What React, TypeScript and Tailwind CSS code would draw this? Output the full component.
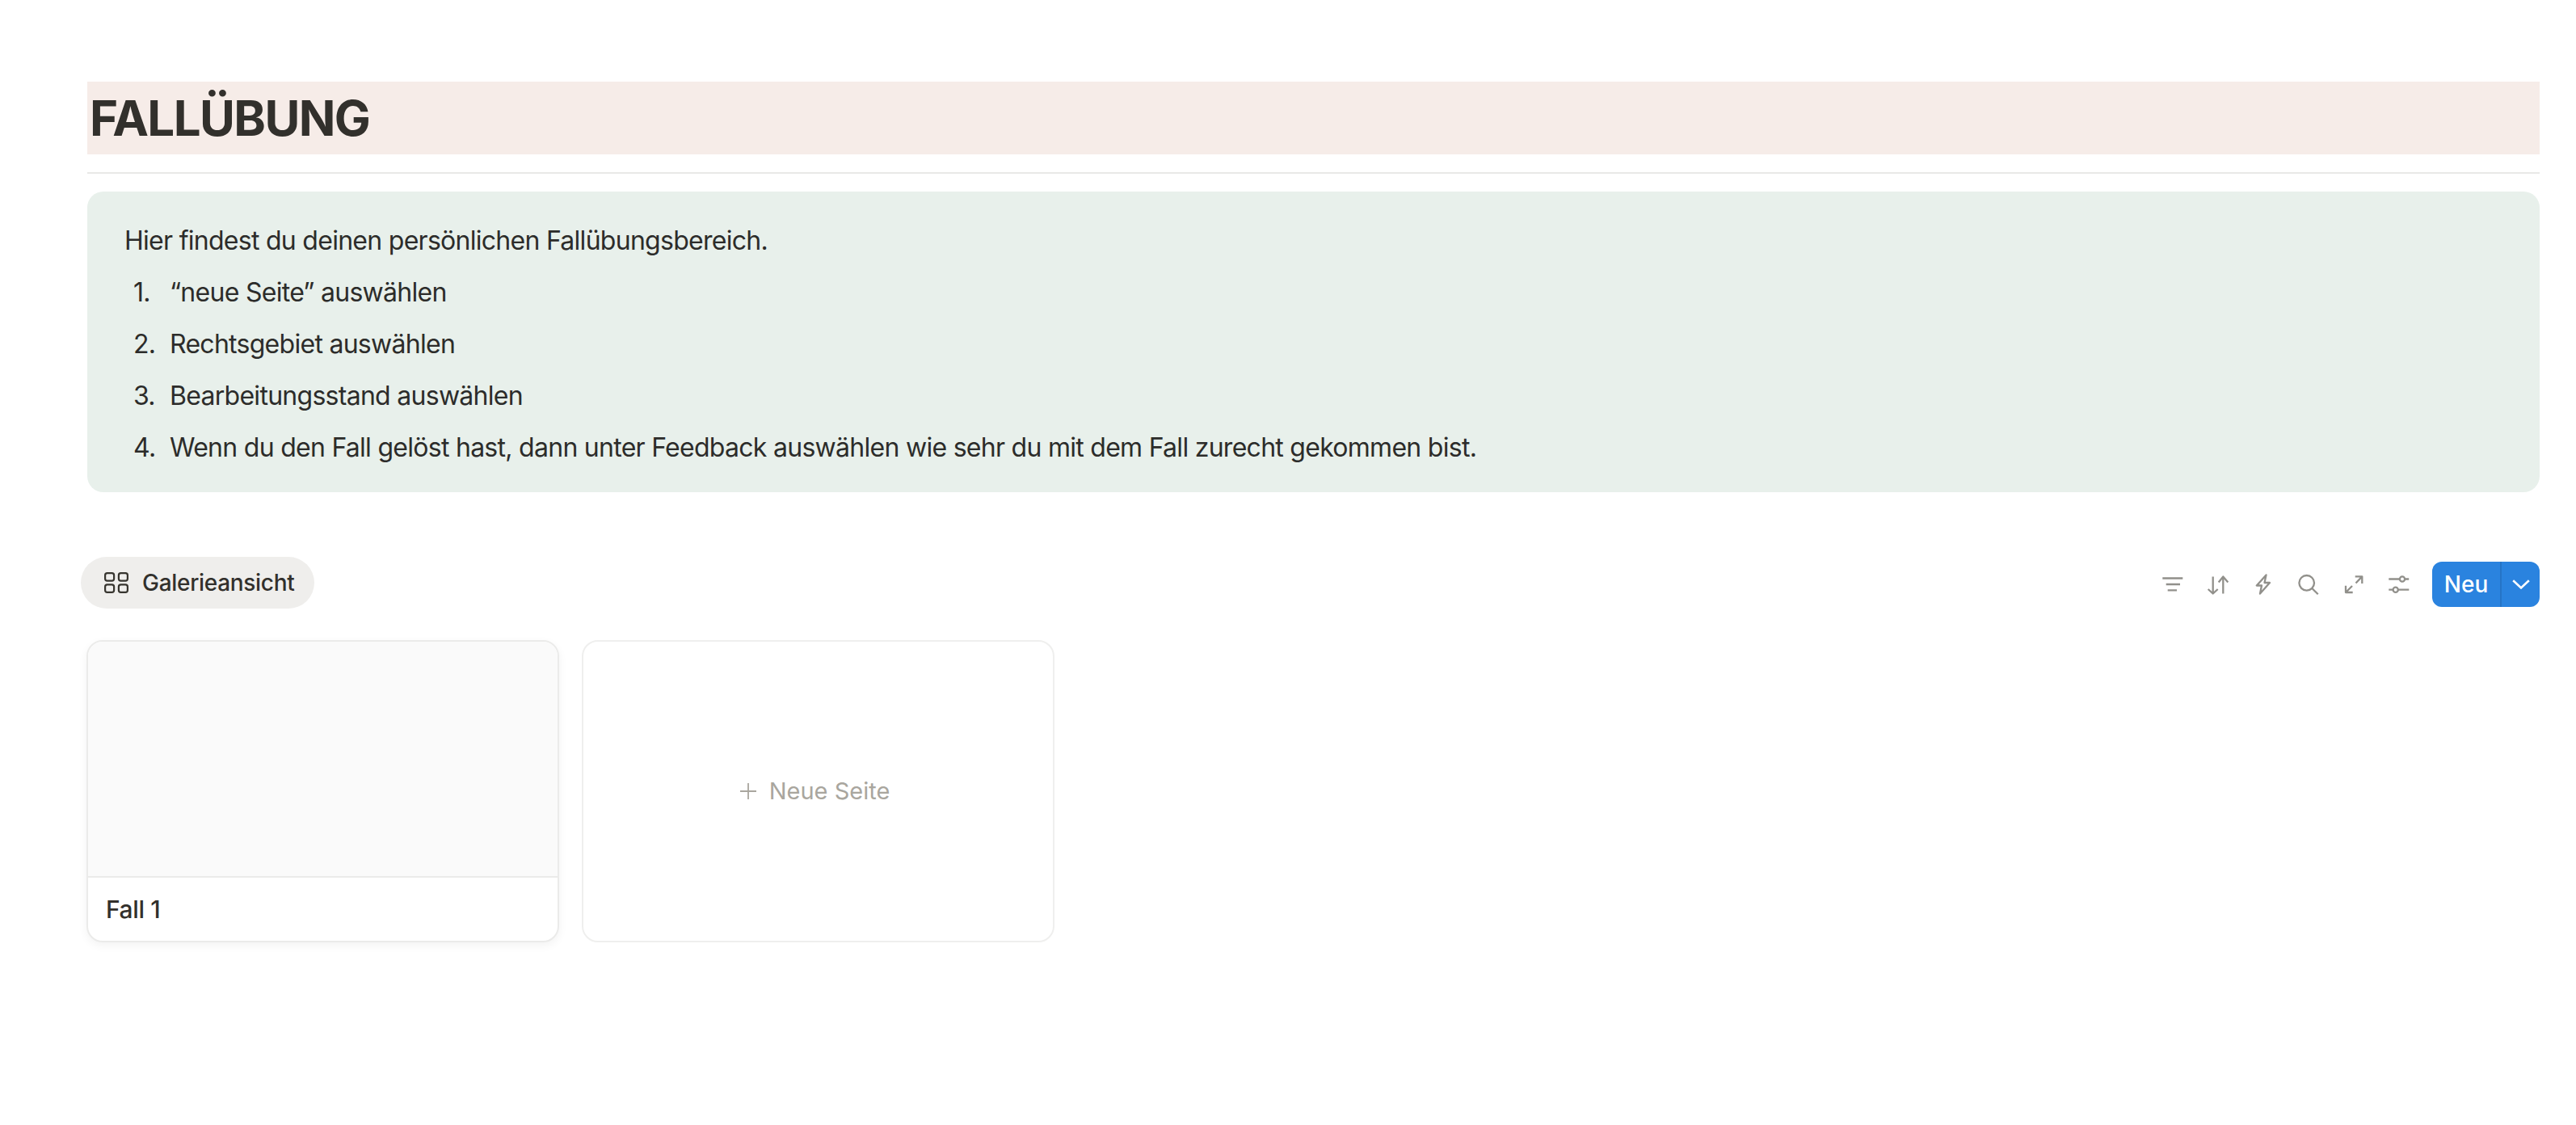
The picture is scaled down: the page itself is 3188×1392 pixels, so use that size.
import React from "react";

const font = "font-['Inter',sans-serif]";

const steps = [
  "“neue Seite” auswählen",
  "Rechtsgebiet auswählen",
  "Bearbeitungsstand auswählen",
  "Wenn du den Fall gelöst hast, dann unter Feedback auswählen wie sehr du mit dem Fall zurecht gekommen bist.",
];

const ToolIcon: React.FC<{ children: React.ReactNode }> = ({ children }) => (
  <svg width="28" height="28" viewBox="0 0 28 28" fill="none" stroke="#91908b" strokeWidth="2.3" strokeLinejoin="round">
    {children}
  </svg>
);

const GalleryIcon = () => (
  <svg width="30" height="26" viewBox="0 0 30 26" fill="none" stroke="#37352f" strokeWidth="2.2">
    <rect x="1.1" y="1.1" width="11" height="9.5" rx="2.6" />
    <rect x="17.9" y="1.1" width="11" height="9.5" rx="2.6" />
    <rect x="1.1" y="15.4" width="11" height="9.5" rx="2.6" />
    <rect x="17.9" y="15.4" width="11" height="9.5" rx="2.6" />
  </svg>
);

export default function App() {
  return (
    <div className={`${font} w-[3188px] h-[1392px] bg-white overflow-hidden pt-[101px] pl-[108px] pr-[45px] text-[#2c2c2a]`}>
      <h1 className="h-[90px] bg-[#f6ece8] pl-[3px] flex items-center text-[60px] font-bold leading-none tracking-[-1.6px] text-[#32302c]">
        FALLÜBUNG
      </h1>
      <div className="mt-[22px] h-[2px] bg-[#e9e9e7]" />

      <div className="mt-[22px] h-[372px] rounded-[20px] bg-[#e8f0eb] pl-[46px] pt-[29px] text-[32px] leading-[64px] tracking-[-0.72px]">
        <p>Hier findest du deinen persönlichen Fallübungsbereich.</p>
        <ol>
          {steps.map((step, i) => (
            <li key={step} className="flex">
              <span className="w-[56px] pl-[11px] shrink-0">{i + 1}.</span>
              <span>{step}</span>
            </li>
          ))}
        </ol>
      </div>

      <div className="mt-[80px] flex items-start justify-between">
        <div className="-ml-[8px] h-[64px] flex items-center gap-[17px] rounded-full bg-[#efeeec] pl-[29px] pr-[24px] text-[28px] font-medium tracking-[-0.3px] text-[#32302c]">
          <GalleryIcon />
          Galerieansicht
        </div>
        <div className="mt-[6px] flex items-center">
          <div className="flex items-center gap-[28px] mr-[27px]">
            <ToolIcon>
              <path d="M1.3 6.5h25M5.7 14h17.3M7.7 21.3H19" />
            </ToolIcon>
            <ToolIcon>
              <path d="M7.7 4.5v21M1.7 20l6 5.5 6-5.5M20.3 25.5v-21M14.7 11.5l5.6-7 6 7" />
            </ToolIcon>
            <ToolIcon>
              <path d="M17.5 2.5 5.8 15.5H12L10 25.5 22 12h-6.5Z" />
            </ToolIcon>
            <ToolIcon>
              <circle cx="11.7" cy="12.3" r="9.3" />
              <path d="M18.6 19.2l7.1 7.1" />
            </ToolIcon>
            <ToolIcon>
              <path d="M15.7 4.3h8.6V13M24 4.6l-7.5 7.9M4 15.7V24h8.7M4.3 23.7l7.7-7.7" />
            </ToolIcon>
            <ToolIcon>
              <path d="M1.3 7.5h13.5M21.2 7.5h5M1.3 20.7h5.2M12.9 20.7h13.4" />
              <circle cx="18" cy="7.5" r="3.1" />
              <circle cx="9.7" cy="20.7" r="3.1" />
            </ToolIcon>
          </div>
          <div className="h-[56px] w-[133px] flex rounded-[12px] bg-[#2a83df] text-white text-[28px] font-medium">
            <span className="w-[86px] flex items-center justify-center border-r-2 border-[#2574c6]">Neu</span>
            <span className="flex-1 flex items-center justify-center">
              <svg width="22" height="12" viewBox="0 0 22 12" fill="none" stroke="currentColor" strokeWidth="2.6">
                <path d="M1.2 1.2 11 10.4l9.8-9.2" />
              </svg>
            </span>
          </div>
        </div>
      </div>

      <div className="-ml-[1px] mt-[39px] flex gap-[28px]">
        <div className="w-[585px] h-[374px] rounded-[20px] border-2 border-[#ebebea] overflow-hidden shadow-[0_4px_12px_rgba(0,0,0,0.05)] flex flex-col bg-white">
          <div className="flex-1 bg-[#fafafa] border-b-2 border-[#ebebea]" />
          <div className="h-[78px] flex items-center pl-[22px] text-[30px] font-medium tracking-[-0.4px] text-[#32302c]">Fall 1</div>
        </div>
        <div className="w-[585px] h-[374px] rounded-[20px] border-2 border-[#efefee] pr-[8px] flex items-center justify-center text-[29px] text-[#a9a69e]">
          <svg width="20" height="20" viewBox="0 0 20 20" fill="none" stroke="currentColor" strokeWidth="1.8" className="mr-[16px]">
            <path d="M0 10h20M10 0v20" />
          </svg>
          Neue Seite
        </div>
      </div>
    </div>
  );
}
